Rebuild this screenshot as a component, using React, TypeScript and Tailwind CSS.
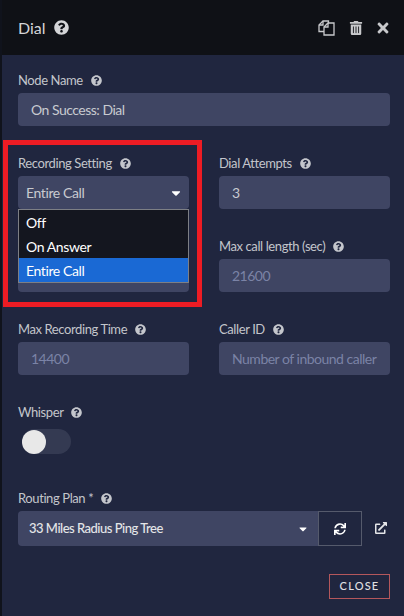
import { FaQuestionCircle, FaTrashAlt, FaTimes, FaSync, FaExternalLinkAlt, FaCaretDown } from "react-icons/fa";

const FONT = "font-['Lato','Open_Sans',sans-serif]";

const Help = ({ size = 11 }: { size?: number }) => (
  <FaQuestionCircle size={size} className="text-[#c4c6cc] shrink-0" />
);

const Label = ({ text }: { text: string }) => (
  <div className="flex items-center gap-[8px] h-[14px] text-[13px] leading-[14px] tracking-[-0.4px] text-[#c3c5cb]">
    <span>{text}</span>
    <Help />
  </div>
);

const Field = ({
  label,
  value,
  placeholder,
}: {
  label?: string;
  value?: string;
  placeholder?: string;
}) => (
  <div className="flex flex-col gap-[6px]">
    {label ? <Label text={label} /> : <div className="h-[14px]" />}
    <div
      className={`h-[33px] rounded-[4px] bg-[#3f4563] px-[13px] flex items-center text-[14px] tracking-[-0.5px] whitespace-nowrap overflow-hidden ${
        value ? "text-[#c8cad0]" : "text-[#7b83a6]"
      }`}
    >
      {value ?? placeholder}
    </div>
  </div>
);

const CopyIcon = () => (
  <svg width="17" height="16" viewBox="0 0 17 16" fill="none" stroke="#c8c9cc" strokeWidth="1.3" className="mr-[2px]">
    <path d="M10.500 3.500V1H5L1 5v6.500h5" />
    <path d="M5 1v4H1" />
    <path d="M6 7l4-4h6v12H6z" />
    <path d="M10 3v4H6" />
  </svg>
);

export default function App() {
  return (
    <div className={`${FONT} relative w-[404px] h-[616px] flex overflow-hidden bg-[#0f1116]`}>
      <div className="w-[2px] shrink-0 bg-[#10131c]" />
      <div className="flex-1 flex flex-col bg-[#20263f]">
        <header className="h-[55px] shrink-0 bg-[#0f1116] flex items-center justify-between pl-[16px] pr-[13px]">
          <div className="flex items-center gap-[8px] text-[16px] text-[#d4d5d8]">
            <span>Dial</span>
            <FaQuestionCircle size={15} className="text-[#d4d5d8]" />
          </div>
          <div className="flex items-center gap-[12px] text-[#c8c9cc]">
            <CopyIcon />
            <FaTrashAlt size={14} />
            <FaTimes size={16} />
          </div>
        </header>

        <div className="flex-1 flex flex-col pl-[16px] pr-[14px] pt-[18px]">
          <Field label="Node Name" value="On Success: Dial" />

          <div className="mt-[30px] grid grid-cols-2 gap-x-[30px] gap-y-[30px]">
            <div className="relative">
              <div className="flex flex-col gap-[6px]">
                <Label text="Recording Setting" />
                <div className="h-[33px] rounded-[4px] bg-[#3f4563] pl-[8px] pr-[6px] flex items-center justify-between text-[14px] tracking-[-0.4px] text-[#c8cad0]">
                  <span>Entire Call</span>
                  <FaCaretDown size={14} className="text-white" />
                </div>
              </div>
              <div className="absolute left-0 right-0 top-[53px] z-10 border border-[#7d7f85] bg-[#14161f] text-[14px] tracking-[-0.4px] text-white">
                <div className="h-[24px] px-[7px] flex items-center">Off</div>
                <div className="h-[24px] px-[7px] flex items-center">On Answer</div>
                <div className="h-[24px] px-[7px] flex items-center bg-[#1a69d4]">Entire Call</div>
              </div>
            </div>
            <Field label="Dial Attempts" value="3" />
            <Field />
            <Field label="Max call length (sec)" placeholder="21600" />
            <Field label="Max Recording Time" placeholder="14400" />
            <Field label="Caller ID" placeholder="Number of inbound caller" />
          </div>

          <div className="mt-[30px]">
            <Label text="Whisper" />
            <div className="mt-[10px] w-[49px] h-[25px] ml-[4px] rounded-full bg-[#343a52] flex items-center">
              <div className="w-[24px] h-[24px] rounded-full bg-[#e8e8e8]" />
            </div>
          </div>

          <div className="mt-[37px]">
            <Label text="Routing Plan *" />
            <div className="mt-[6px] flex items-start">
              <div className="flex-1 flex">
                <div className="flex-1 h-[35px] rounded-l-[4px] bg-[#3f4563] pl-[11px] pr-[9px] flex items-center justify-between text-[13px] font-medium tracking-[-0.5px] text-[#e4e5e8]">
                  <span>33 Miles Radius Ping Tree</span>
                  <FaCaretDown size={12} className="text-white" />
                </div>
                <div className="w-[44px] h-[35px] border border-[#555a6c] flex items-center justify-center text-white">
                  <FaSync size={12} />
                </div>
              </div>
              <div className="w-[28px] flex justify-end pr-[3px] pt-[11px] text-[#e4e5e8]">
                <FaExternalLinkAlt size={12} />
              </div>
            </div>
          </div>

          <div className="mt-[28px] flex justify-end">
            <button className="w-[61px] h-[25px] border border-[#b4575c] text-[11px] font-medium tracking-[1.2px] text-[#e0e1e4] flex items-center justify-center">
              CLOSE
            </button>
          </div>
        </div>
      </div>

      {/* red annotation box */}
      <div className="absolute left-[3px] top-[140px] w-[199px] h-[167px] border-[5px] border-[#ed1c24] z-20 pointer-events-none" />
    </div>
  );
}
